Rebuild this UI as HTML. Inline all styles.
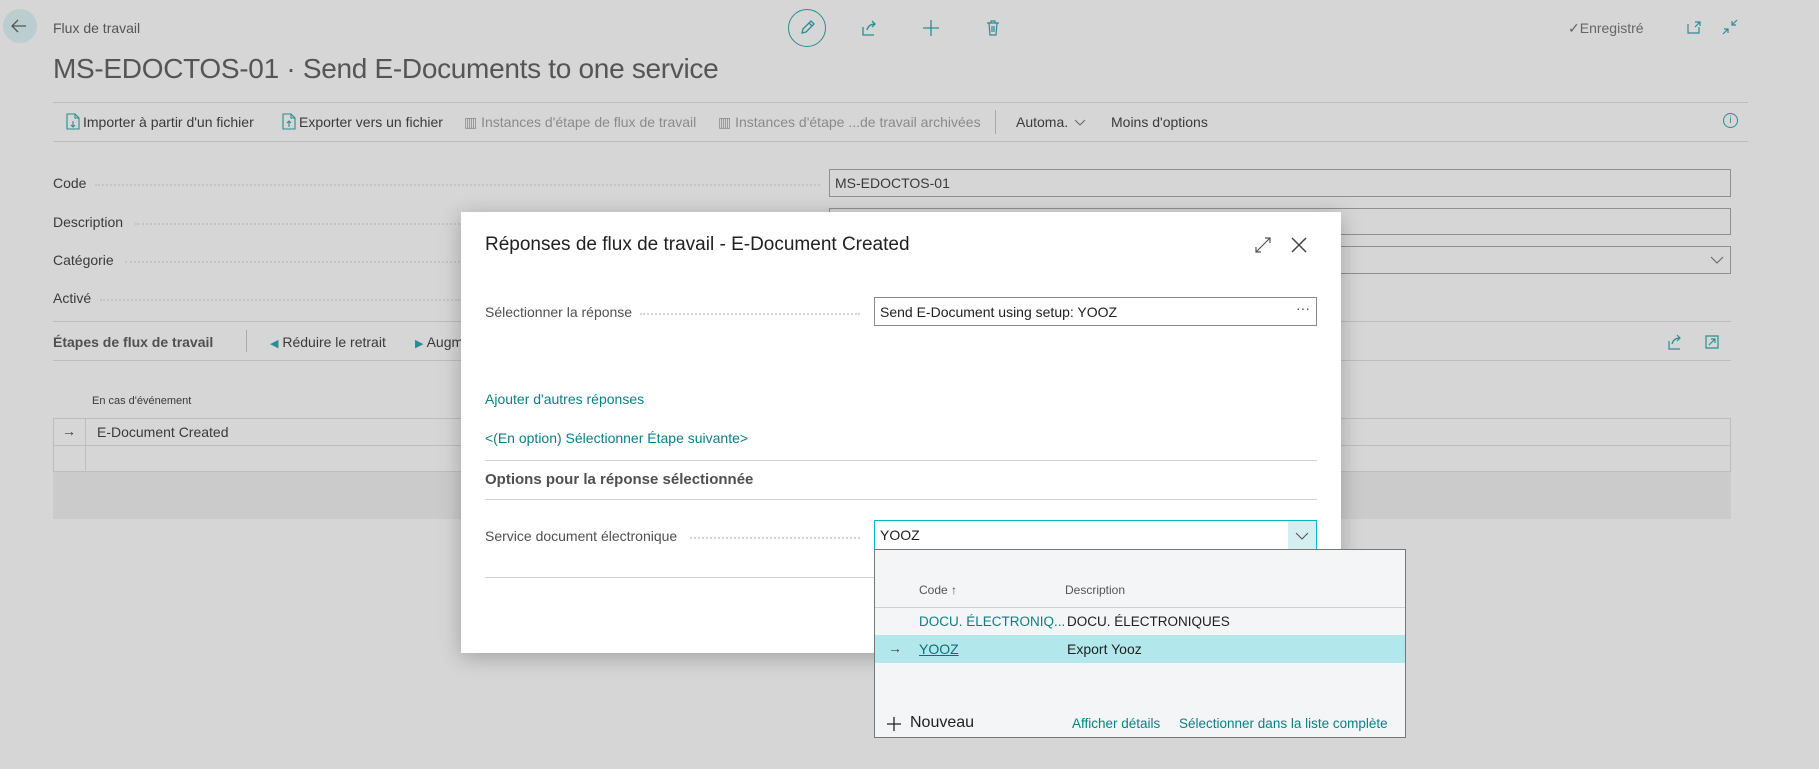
<!DOCTYPE html>
<html><head><meta charset="utf-8"><style>
*{margin:0;padding:0;box-sizing:border-box}
body{width:1819px;height:769px;background:#d6d6d6;font-family:"Liberation Sans",sans-serif;font-size:14px;color:#3a3a3a;position:relative;overflow:hidden}
.a{position:absolute;white-space:nowrap}
.t{color:#0a7f86}
.g{color:#8a8a8a}
.line{position:absolute;height:1px;background:#bdbdbd}
.box{position:absolute;border:1px solid #8f8f8f;background:#d6d6d6}
.dots{position:absolute;border-bottom:2px dotted #c4c4c4;height:2px}
.dw{border-bottom-color:#d4d4d4}
</style></head><body>
<div class="a" style="left:3px;top:9px;width:34px;height:34px;border-radius:50%;background:#bccdcf"></div>
<svg class="a" style="left:10px;top:17px" width="18" height="18" viewBox="0 0 18 18"><path d="M16 9H2M8 3L2 9l6 6" stroke="#555" stroke-width="1.3" fill="none"/></svg>
<div class="a" style="left:53px;top:20px;font-size:14px;color:#555">Flux de travail</div>
<div class="a" style="left:53px;top:53px;font-size:28px;color:#555;letter-spacing:-0.3px">MS-EDOCTOS-01 · Send E-Documents to one service</div>
<div class="a" style="left:788px;top:9px;width:38px;height:38px;border-radius:50%;border:1.5px solid #2a8d93"></div>
<svg class="a" style="left:798px;top:19px" width="18" height="18" viewBox="0 0 18 18"><path d="M4 14l1-4 8-8 3 3-8 8zM11 4l3 3" stroke="#2a8d93" stroke-width="1.3" fill="none"/></svg>
<svg class="a" style="left:860px;top:19px" width="18" height="18" viewBox="0 0 18 18"><path d="M3 8v8h11M7 11c1-4 4-6 8-6M12 2l3 3-3 3" stroke="#2a8d93" stroke-width="1.3" fill="none"/></svg>
<svg class="a" style="left:922px;top:19px" width="18" height="18" viewBox="0 0 18 18"><path d="M9 1v16M1 9h16" stroke="#2a8d93" stroke-width="1.3"/></svg>
<svg class="a" style="left:984px;top:19px" width="18" height="18" viewBox="0 0 18 18"><path d="M3 4h12M7 4V2h4v2M5 4l1 12h6l1-12M8 7v6M10 7v6" stroke="#2a8d93" stroke-width="1.2" fill="none"/></svg>
<div class="a" style="left:1568px;top:20px;color:#666">✓Enregistré</div>
<svg class="a" style="left:1686px;top:19px" width="16" height="16" viewBox="0 0 16 16"><path d="M2 5v9h11V8M9 3h5v4M14 3l-5 5" stroke="#2a8d93" stroke-width="1.2" fill="none"/></svg>
<svg class="a" style="left:1722px;top:19px" width="16" height="16" viewBox="0 0 16 16"><path d="M15 1l-5 5M10 2v4h4M1 15l5-5M2 10h4v4" stroke="#2a8d93" stroke-width="1.2" fill="none"/></svg>
<div class="line" style="left:53px;top:102px;width:1695px"></div>
<div class="line" style="left:53px;top:141px;width:1695px"></div>
<svg class="a" style="left:66px;top:113px" width="14" height="17" viewBox="0 0 14 17"><path d="M1 1h8l4 4v11H1zM9 1v4h4M7 8v6M5 12l2 2 2-2" stroke="#2a8d93" stroke-width="1.1" fill="none"/></svg>
<div class="a" style="left:83px;top:114px">Importer à partir d'un fichier</div>
<svg class="a" style="left:282px;top:113px" width="14" height="17" viewBox="0 0 14 17"><path d="M1 1h8l4 4v11H1zM9 1v4h4M7 14V8M5 10l2-2 2 2" stroke="#2a8d93" stroke-width="1.1" fill="none"/></svg>
<div class="a" style="left:299px;top:114px">Exporter vers un fichier</div>
<div class="a g" style="left:464px;top:114px">▥ Instances d'étape de flux de travail</div>
<div class="a g" style="left:718px;top:114px">▥ Instances d'étape ...de travail archivées</div>
<div class="a" style="left:995px;top:110px;width:1px;height:24px;background:#aaa"></div>
<div class="a" style="left:1016px;top:114px">Automa.</div>
<svg class="a" style="left:1074px;top:117px" width="12" height="10" viewBox="0 0 12 10"><path d="M1 3l5 5 5-5" stroke="#666" stroke-width="1" fill="none"/></svg>
<div class="a" style="left:1111px;top:114px">Moins d'options</div>
<div class="a" style="left:1723px;top:113px;width:15px;height:15px;border:1px solid #2a8d93;border-radius:50%;font-size:10px;text-align:center;line-height:13px;color:#2a8d93">i</div>
<div class="a" style="left:53px;top:175px">Code</div><div class="dots" style="left:95px;top:184px;width:725px"></div>
<div class="a" style="left:53px;top:214px">Description</div><div class="dots" style="left:135px;top:223px;width:325px"></div>
<div class="a" style="left:53px;top:252px">Catégorie</div><div class="dots" style="left:125px;top:261px;width:335px"></div>
<div class="a" style="left:53px;top:290px">Activé</div><div class="dots" style="left:100px;top:299px;width:360px"></div>
<div class="box" style="left:829px;top:169px;width:902px;height:28px"></div>
<div class="a" style="left:835px;top:175px">MS-EDOCTOS-01</div>
<div class="box" style="left:829px;top:208px;width:902px;height:27px"></div>
<div class="box" style="left:829px;top:246px;width:902px;height:28px"></div>
<svg class="a" style="left:1710px;top:255px" width="14" height="10" viewBox="0 0 14 10"><path d="M1 2l6 6 6-6" stroke="#666" stroke-width="1.1" fill="none"/></svg>
<div class="line" style="left:53px;top:321px;width:1678px"></div>
<div class="line" style="left:53px;top:360px;width:1678px"></div>
<div class="a" style="left:53px;top:334px;font-weight:bold;color:#505050">Étapes de flux de travail</div>
<div class="a" style="left:246px;top:330px;width:1px;height:22px;background:#aaa"></div>
<div class="a" style="left:270px;top:334px"><span style="font-size:11px;color:#2a8d93">◀</span> Réduire le retrait</div>
<div class="a" style="left:415px;top:334px"><span style="font-size:11px;color:#2a8d93">▶</span> Augm</div>
<svg class="a" style="left:1667px;top:334px" width="16" height="16" viewBox="0 0 16 16"><path d="M2 7v8h11M5 10c1-4 4-6 8-6M10 1l3 3-3 3" stroke="#2a8d93" stroke-width="1.2" fill="none"/></svg>
<svg class="a" style="left:1704px;top:334px" width="16" height="16" viewBox="0 0 16 16"><path d="M2 2h12v12H2zM5 11l6-6M7 5h4v4" stroke="#2a8d93" stroke-width="1.2" fill="none"/></svg>
<div class="a" style="left:92px;top:395px;font-size:11px">En cas d'événement</div>
<div class="a" style="left:53px;top:418px;width:1678px;height:54px;border:1px solid #bdbdbd"></div>
<div class="line" style="left:53px;top:445px;width:1678px"></div>
<div class="a" style="left:85px;top:418px;width:1px;height:54px;background:#bdbdbd"></div>
<div class="a" style="left:62px;top:423px">→</div>
<div class="a" style="left:97px;top:424px">E-Document Created</div>
<div class="a" style="left:53px;top:472px;width:1678px;height:47px;background:#cbcbcb"></div>
<div class="a" style="left:461px;top:212px;width:880px;height:441px;background:#fff;box-shadow:0 4px 20px rgba(0,0,0,.25)"></div>
<div class="a" style="left:485px;top:234px;font-size:19px;color:#212121">Réponses de flux de travail - E-Document Created</div>
<svg class="a" style="left:1254px;top:236px" width="18" height="18" viewBox="0 0 18 18"><path d="M2 16L16 2M11 2h5v5M2 11v5h5" stroke="#555" stroke-width="1.2" fill="none"/></svg>
<svg class="a" style="left:1289px;top:235px" width="20" height="20" viewBox="0 0 20 20"><path d="M3 3l14 14M17 3L3 17" stroke="#444" stroke-width="1.5"/></svg>
<div class="a" style="left:485px;top:304px;color:#505050">Sélectionner la réponse</div><div class="dots dw" style="left:640px;top:313px;width:220px"></div>
<div class="a" style="left:874px;top:297px;width:443px;height:29px;border:1px solid #8a8a8a"></div>
<div class="a" style="left:880px;top:304px;color:#212121">Send E-Document using setup: YOOZ</div>
<div class="a" style="left:1296px;top:300px;color:#444">···</div>
<div class="a t" style="left:485px;top:391px">Ajouter d'autres réponses</div>
<div class="a t" style="left:485px;top:430px">&lt;(En option) Sélectionner Étape suivante&gt;</div>
<div class="line" style="left:485px;top:460px;width:832px;background:#d0d0d0"></div>
<div class="a" style="left:485px;top:471px;font-size:15px;font-weight:bold;color:#505050">Options pour la réponse sélectionnée</div>
<div class="line" style="left:485px;top:499px;width:832px;background:#d0d0d0"></div>
<div class="a" style="left:485px;top:528px;color:#505050">Service document électronique</div><div class="dots dw" style="left:690px;top:537px;width:170px"></div>
<div class="a" style="left:874px;top:520px;width:443px;height:30px;border:1.5px solid #00b7c3"></div>
<div class="a" style="left:1288px;top:521px;width:28px;height:28px;background:#d5eef0"></div>
<svg class="a" style="left:1295px;top:531px" width="14" height="10" viewBox="0 0 14 10"><path d="M1 2l6 6 6-6" stroke="#555" stroke-width="1.1" fill="none"/></svg>
<div class="a" style="left:880px;top:527px;color:#212121">YOOZ</div>
<div class="line" style="left:485px;top:577px;width:389px;background:#d0d0d0"></div>
<div class="a" style="left:874px;top:549px;width:532px;height:189px;background:#f4f5f6;border:1px solid #777"></div>
<div class="a" style="left:919px;top:583px;font-size:12px;color:#555">Code ↑</div>
<div class="a" style="left:1065px;top:583px;font-size:12px;color:#555">Description</div>
<div class="line" style="left:875px;top:607px;width:530px;background:#d0d0d0"></div>
<div class="a t" style="left:919px;top:614px;font-size:13.5px">DOCU. ÉLECTRONIQ...</div>
<div class="a" style="left:1067px;top:614px;color:#212121;font-size:13.5px">DOCU. ÉLECTRONIQUES</div>
<div class="a" style="left:875px;top:635px;width:530px;height:28px;background:#b2e8ec"></div>
<div class="a" style="left:888px;top:640px;color:#444">→</div>
<div class="a" style="left:919px;top:641px;color:#0a6f76;text-decoration:underline">YOOZ</div>
<div class="a" style="left:1067px;top:641px;color:#212121">Export Yooz</div>
<svg class="a" style="left:887px;top:717px" width="14" height="14" viewBox="0 0 14 14"><path d="M7 0v14M0 7h14" stroke="#222" stroke-width="1.3"/></svg>
<div class="a" style="left:910px;top:714px;font-size:16px;color:#212121">Nouveau</div>
<div class="a t" style="left:1072px;top:716px;font-size:13.5px">Afficher détails</div>
<div class="a t" style="left:1179px;top:716px;font-size:13.5px">Sélectionner dans la liste complète</div>
</body></html>
